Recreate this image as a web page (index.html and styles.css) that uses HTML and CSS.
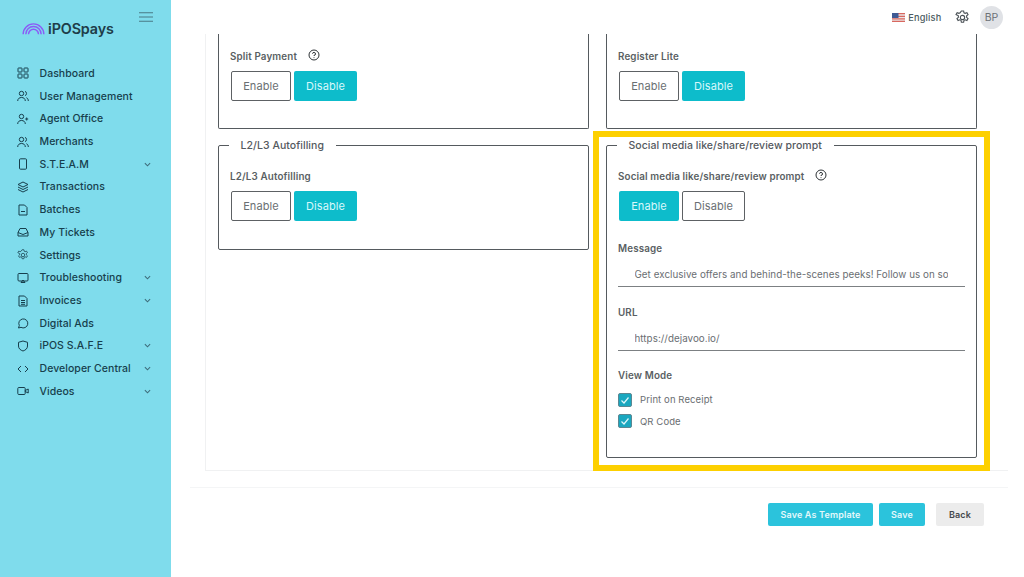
FILE: index.html
```html
<!DOCTYPE html>
<html lang="en">
<head>
<meta charset="utf-8">
<title>iPOSpays</title>
<link rel="stylesheet" href="styles.css">
</head>
<body>
<div class="app">
  <aside class="sidebar">
    <div class="brand">
      <svg class="logo" viewBox="0 0 24 13" width="23" height="13" fill="none" stroke="#8b5cf6" stroke-width="1.500"><path d="M1.200 12.500a10.800 10.800 0 0 1 21.600 0"/><path d="M4 12.500a8 8 0 0 1 16 0"/><path d="M6.800 12.500a5.200 5.200 0 0 1 10.400 0"/></svg>
      <span class="brand-name">iPOSpays</span>
      <svg class="burger" viewBox="0 0 14 10" width="14" height="10" stroke="#4a7a85" stroke-width="1.100"><path d="M0 .8h14M0 5h14M0 9.200h14"/></svg>
    </div>
    <nav class="nav">
      <a class="nav-item"><svg class="ico" viewBox="0 0 12 12"><rect x="1" y="1" width="4" height="4" rx=".5"/><rect x="7" y="1" width="4" height="4" rx=".5"/><rect x="1" y="7" width="4" height="4" rx=".5"/><rect x="7" y="7" width="4" height="4" rx=".5"/></svg><span>Dashboard</span></a>
      <a class="nav-item"><svg class="ico" viewBox="0 0 12 12"><circle cx="4.500" cy="3.500" r="2.200"/><path d="M.7 11c0-2.300 1.600-3.500 3.800-3.500s3.800 1.200 3.800 3.500M8 1.400a2.200 2.200 0 0 1 0 4.200M9.400 7.700c1.200.5 1.900 1.600 1.900 3.300"/></svg><span>User Management</span></a>
      <a class="nav-item"><svg class="ico" viewBox="0 0 12 12"><circle cx="4.500" cy="3.500" r="2.200"/><path d="M.7 11c0-2.300 1.600-3.500 3.800-3.500S8.300 8.700 8.300 11M9.700 4.500v3M8.200 6h3"/></svg><span>Agent Office</span></a>
      <a class="nav-item"><svg class="ico" viewBox="0 0 12 12"><circle cx="4.500" cy="3.500" r="2.200"/><path d="M.7 11c0-2.300 1.600-3.500 3.800-3.500s3.800 1.200 3.800 3.500M8 1.400a2.200 2.200 0 0 1 0 4.200M9.400 7.700c1.200.5 1.900 1.600 1.900 3.300"/></svg><span>Merchants</span></a>
      <a class="nav-item"><svg class="ico" viewBox="0 0 12 12"><rect x="2.500" y=".8" width="7" height="10.400" rx="1"/></svg><span>S.T.E.A.M</span><svg class="chev" viewBox="0 0 8 5"><path d="M1 1l3 3 3-3"/></svg></a>
      <a class="nav-item"><svg class="ico" viewBox="0 0 12 12"><path d="M6 1l5 2.500-5 2.500-5-2.500zM1 6l5 2.500L11 6M1 8.500L6 11l5-2.500"/></svg><span>Transactions</span></a>
      <a class="nav-item"><svg class="ico" viewBox="0 0 12 12"><path d="M2 1h5.500L10 3.500V11H2zM4 7.500h4"/></svg><span>Batches</span></a>
      <a class="nav-item"><svg class="ico" viewBox="0 0 12 12"><path d="M1 6.500L3 2.500h6l2 4v3.500H1zM1 6.500l5 2 5-2"/></svg><span>My Tickets</span></a>
      <a class="nav-item"><svg class="ico" viewBox="0 0 16 16"><circle cx="8" cy="8" r="2.300"/><path d="M6.800 1h2.400l.4 2 1.200.6 1.900-.8 1.200 2.100-1.500 1.300v1.600l1.500 1.300-1.200 2.100-1.900-.8-1.200.6-.4 2H6.800l-.4-2-1.200-.6-1.900.8-1.200-2.100 1.500-1.300V6.200L1.100 4.900l1.200-2.100 1.900.8 1.200-.6z"/></svg><span>Settings</span></a>
      <a class="nav-item"><svg class="ico" viewBox="0 0 12 12"><rect x="1" y="1.500" width="10" height="7.500" rx="1"/><path d="M4 10.500l2-2.500 2 2.500z"/></svg><span>Troubleshooting</span><svg class="chev" viewBox="0 0 8 5"><path d="M1 1l3 3 3-3"/></svg></a>
      <a class="nav-item"><svg class="ico" viewBox="0 0 12 12"><path d="M2 1h5.500L10 3.500V11H2zM4 5.500h4M4 7.500h4M4 9.300h4"/></svg><span>Invoices</span><svg class="chev" viewBox="0 0 8 5"><path d="M1 1l3 3 3-3"/></svg></a>
      <a class="nav-item"><svg class="ico" viewBox="0 0 12 12"><path d="M2.300 8.500A4.500 4.500 0 1 1 4 10.300L1.500 11z"/></svg><span>Digital Ads</span></a>
      <a class="nav-item"><svg class="ico" viewBox="0 0 12 12"><path d="M6 1l4.500 1.300V6c0 2.600-2 4.200-4.500 5-2.500-.8-4.500-2.400-4.500-5V2.300z"/></svg><span>iPOS S.A.F.E</span><svg class="chev" viewBox="0 0 8 5"><path d="M1 1l3 3 3-3"/></svg></a>
      <a class="nav-item"><svg class="ico" viewBox="0 0 12 12"><path d="M4 3L1 6l3 3M8 3l3 3-3 3"/></svg><span>Developer Central</span><svg class="chev" viewBox="0 0 8 5"><path d="M1 1l3 3 3-3"/></svg></a>
      <a class="nav-item"><svg class="ico" viewBox="0 0 12 12"><rect x=".8" y="2.500" width="7.400" height="7" rx="1"/><path d="M8.200 5.500l3-1.500v4l-3-1.500z"/></svg><span>Videos</span><svg class="chev" viewBox="0 0 8 5"><path d="M1 1l3 3 3-3"/></svg></a>
    </nav>
  </aside>

  <main class="main">
    <header class="topbar">
      <span class="lang">
        <svg class="flag" viewBox="0 0 13 9" width="13" height="9"><rect width="13" height="9" fill="#e9e4e6"/><path d="M0 .7h13M0 3.300h13M0 5.900h13M0 8.400h13" stroke="#d9685f" stroke-width="1.200"/><rect width="6.500" height="5" fill="#3f5a94"/></svg>
        English
      </span>
      <svg class="gear" viewBox="0 0 16 16" width="15" height="15"><circle cx="8" cy="8" r="2.300"/><path d="M6.800 1h2.400l.4 2 1.200.6 1.900-.8 1.200 2.100-1.500 1.300v1.600l1.500 1.300-1.200 2.100-1.900-.8-1.200.6-.4 2H6.800l-.4-2-1.200-.6-1.900.8-1.200-2.100 1.500-1.300V6.200L1.100 4.900l1.200-2.100 1.900.8 1.200-.6z"/></svg>
      <span class="avatar">BP</span>
    </header>

    <div class="content">
      <section class="settings">
        <fieldset class="card card-clipped">
          <div class="field-label">Split Payment <svg class="help" viewBox="0 0 12 12" width="12" height="12"><circle cx="6" cy="6" r="5"/><path d="M4.500 4.700A1.500 1.500 0 1 1 6 6.400v.6M6 8.300v.8"/></svg></div>
          <div class="toggle"><button class="btn-off">Enable</button><button class="btn-on">Disable</button></div>
        </fieldset>
        <fieldset class="card card-clipped">
          <div class="field-label">Register Lite</div>
          <div class="toggle"><button class="btn-off">Enable</button><button class="btn-on">Disable</button></div>
        </fieldset>
        <fieldset class="card card-short">
          <legend>L2/L3 Autofilling</legend>
          <div class="field-label">L2/L3 Autofilling</div>
          <div class="toggle"><button class="btn-off">Enable</button><button class="btn-on">Disable</button></div>
        </fieldset>
        <div class="highlight-wrap">
          <fieldset class="card card-tall">
            <legend>Social media like/share/review prompt</legend>
            <div class="field-label">Social media like/share/review prompt <svg class="help" viewBox="0 0 12 12" width="12" height="12"><circle cx="6" cy="6" r="5"/><path d="M4.500 4.700A1.500 1.500 0 1 1 6 6.400v.6M6 8.300v.8"/></svg></div>
            <div class="toggle"><button class="btn-on">Enable</button><button class="btn-off">Disable</button></div>
            <div class="field-label label-gap">Message</div>
            <div class="text-field"><span class="text-clip">Get exclusive offers and behind-the-scenes peeks! Follow us on social media</span></div>
            <div class="field-label label-gap">URL</div>
            <div class="text-field"><span class="text-clip">https://dejavoo.io/</span></div>
            <div class="field-label label-gap label-view">View Mode</div>
            <label class="check"><span class="box"><svg viewBox="0 0 12 12" width="12" height="12"><path d="M2.500 6.500l2.500 2.500 4.500-5.500"/></svg></span>Print on Receipt</label>
            <label class="check"><span class="box"><svg viewBox="0 0 12 12" width="12" height="12"><path d="M2.500 6.500l2.500 2.500 4.500-5.500"/></svg></span>QR Code</label>
          </fieldset>
          <div class="highlight"></div>
        </div>
      </section>
      <footer class="actions">
        <button class="act act-primary">Save As Template</button>
        <button class="act act-primary act-save">Save</button>
        <button class="act act-back">Back</button>
      </footer>
    </div>
  </main>
</div>
</body>
</html>
```

FILE: styles.css
```css
* { box-sizing: border-box; }
html, body { margin: 0; height: 100%; }
body { font-family: Inter, "Open Sans", sans-serif; background: #fff; overflow: hidden; }
.app { display: flex; width: 1024px; height: 577px; }

.sidebar { width: 171px; flex: none; background: #7fdcec; color: #173f4d; }
.brand { display: flex; align-items: flex-start; height: 62px; padding: 22px 0 0 22px; position: relative; }
.logo { flex: none; }
.brand-name { font-size: 14.300px; font-weight: 600; color: #1e3d49; margin-left: 3px; line-height: 14px; letter-spacing: -.1px; }
.burger { position: absolute; left: 139px; top: 12px; }
.nav { display: flex; flex-direction: column; }
.nav-item { display: flex; align-items: center; height: 22.730px; padding-left: 17px; font-size: 10.500px; font-weight: 500; letter-spacing: .05px; }
.ico { width: 12px; height: 12px; flex: none; margin-right: 10.500px; fill: none; stroke: #173f4d; stroke-width: 1; }
.chev { width: 7px; height: 5px; margin-left: auto; margin-right: 20px; fill: none; stroke: #3e6d7b; stroke-width: 1.200; }

.main { flex: 1; min-width: 0; display: flex; flex-direction: column; }
.topbar { height: 34px; flex: none; display: flex; align-items: center; justify-content: flex-end; padding-right: 21px; }
.lang { display: flex; align-items: center; gap: 3px; font-size: 9.200px; font-weight: 500; color: #4b5a60; letter-spacing: .2px; }
.gear { margin-left: 13.500px; fill: none; stroke: #4b5257; stroke-width: 1.200; }
.avatar { width: 23px; height: 23px; margin-left: 10px; border-radius: 50%; background: #e0e2e6; color: #6c7176; font-size: 10.500px; display: flex; align-items: center; justify-content: center; }

.content { padding: 0 16px 0 19px; }
.settings { display: grid; grid-template-columns: 371px 371px; column-gap: 17px; row-gap: 17px; align-items: start; padding: 0 0 12px 12px; border-left: 1px solid #f0f1f2; border-bottom: 1px solid #f0f1f2; margin-left: 15px; width: 803px; }
.card { margin: 0; min-width: 0; border: 1px solid #555a5e; border-radius: 2px; padding: 0 11.500px 0 11px; color: #555; }
.card legend { margin-left: -1.500px; padding: 0 12px; font-size: 10.500px; font-weight: 500; color: #54595e; line-height: 13px; letter-spacing: .05px; }
.card-clipped { height: 95px; border-top: 0; border-top-left-radius: 0; border-top-right-radius: 0; padding-top: 15.500px; }
.card-short { height: 111px; margin-top: -7px; padding-top: 17.500px; }
.highlight-wrap { position: relative; margin-top: -7px; }
.card-tall { height: 319px; padding-top: 17.500px; }
.highlight { position: absolute; left: -13px; right: -13px; top: -8px; bottom: -13px; border: 6.500px solid #fdd000; pointer-events: none; }

.field-label { display: flex; align-items: center; gap: 11px; font-size: 9.800px; font-weight: 600; color: #5a5f63; line-height: 13px; letter-spacing: .15px; }
.help { fill: none; stroke: #2e3336; stroke-width: 1; flex: none; margin-top: -3px; }
.toggle { display: flex; gap: 3px; margin-top: 8.500px; margin-left: 1px; }
.toggle button { width: 60px; height: 30px; border-radius: 2px; font: 400 11px Inter, sans-serif; padding: 0; letter-spacing: .1px; }
.toggle button:last-child { width: 63px; }
.btn-off { background: #fff; border: 1px solid #5d6164; color: #6a6f73; }
.btn-on { background: #0dbccb; border: 0; color: #d8f8fb; }
.label-gap { margin-top: 20.500px; }
.text-field + .label-gap { margin-top: 19px; }
.text-field + .label-view { margin-top: 18px; }
.text-field { margin-top: 7px; height: 25px; border-bottom: 1px solid #7c8083; padding: 3px 17px 0 16.500px; font-size: 9.800px; color: #6a6e72; line-height: 20px; letter-spacing: .05px; }
.text-clip { display: block; overflow: hidden; white-space: nowrap; }
.check { display: flex; align-items: center; gap: 8px; height: 21.500px; font-size: 9.500px; color: #6a6e72; letter-spacing: .1px; }
.label-gap + .check { margin-top: 7.500px; }
.box { width: 14px; height: 14px; border-radius: 2px; background: #1aa7bf; border: 1px solid #5b8792; display: flex; align-items: center; justify-content: center; }
.box svg { fill: none; stroke: #dff7fb; stroke-width: 1.200; }

.actions { display: flex; justify-content: flex-end; align-items: center; margin-top: 16px; padding-top: 15px; padding-right: 24px; border-top: 1px solid #f4f5f6; }
.act { height: 23px; border: 0; border-radius: 2px; font: 600 9px Inter, sans-serif; letter-spacing: .15px; padding: 0; }
.act-primary { background: #2bc3dc; color: #e3f8fb; width: 105px; }
.act-save { width: 46px; margin-left: 6px; }
.act-back { width: 48px; margin-left: 11px; background: #ececec; color: #44484b; }
```
